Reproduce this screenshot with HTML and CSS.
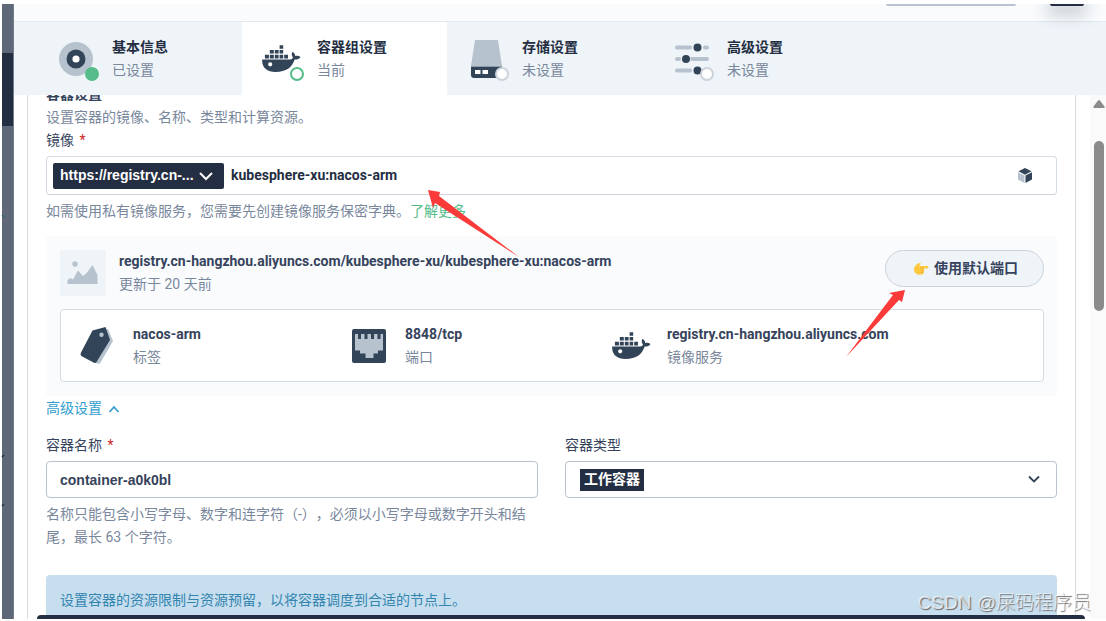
FILE: index.html
```html
<!DOCTYPE html>
<html lang="zh-CN">
<head>
<meta charset="utf-8">
<title>容器组设置</title>
<link rel="stylesheet" href="styles.css">
</head>
<body>
<svg class="defs" aria-hidden="true">
  <symbol id="docker" viewBox="0 0 40 40">
    <g fill="#324558">
      <path d="M17.600 6.200h3.600v3.600h-3.600zM7.800 11h4v3.600h-4zM12.800 11h3.800v3.600h-3.800zM17.600 11h3.600v3.600h-3.600zM2.900 15.800h4v3.600h-4zM7.800 15.800h4v3.600h-4zM12.800 15.800h3.800v3.600h-3.800zM17.600 15.800h3.600v3.600h-3.600zM22.200 15.800h3.800v3.600h-3.800z"/>
      <path fill-rule="evenodd" d="M.2 20.500H28c1.600 0 2.600-.8 3-2-1.600-1.600-1.700-3.900-.4-5.800 1.700 1.100 2.600 2.600 2.600 4.200 1.900-.5 3.700-.2 5.300 1.100-1.200 1.900-3.100 2.700-5.800 2.600C30 28.500 24.500 33 13.500 33 5 33-.5 28.500.2 20.500zM8.200 23.200a2.100 2.100 0 1 0 0 4.200 2.100 2.100 0 0 0 0-4.200z"/>
    </g>
  </symbol>
</svg>
<div class="screen">
  <aside class="rail">
    <div class="rail-active"></div>
    <svg class="rail-marks" viewBox="0 0 11 300"><path d="M0 89l2 2" stroke="#2f6b62" stroke-width="1.500"/><path d="M0 0" /><path d="M0 331l2-2M0 380l2-2" stroke="#242e42" stroke-width="1.500"/></svg>
  </aside>
  <main class="main">
    <header class="topbar">
      <span class="top-pill"></span>
      <span class="top-button"></span>
    </header>
    <nav class="steps">
      <div class="step">
        <span class="step-icon">
          <svg viewBox="0 0 40 40"><circle cx="19" cy="20" r="17" fill="#b6c2cd"/><circle cx="19" cy="20" r="9.500" fill="#324558"/><circle cx="19" cy="20" r="3.600" fill="#fff"/></svg>
          <i class="dot done"></i>
        </span>
        <span class="pair"><strong>基本信息</strong><span>已设置</span></span>
      </div>
      <div class="step current">
        <span class="step-icon">
          <svg viewBox="0 0 40 40"><use href="#docker"/></svg>
          <i class="dot now"></i>
        </span>
        <span class="pair"><strong>容器组设置</strong><span>当前</span></span>
      </div>
      <div class="step">
        <span class="step-icon">
          <svg viewBox="0 0 40 40"><path d="M8 1h23l4 26H4z" fill="#b6c2cd"/><path d="M4 27.500h31V36a3 3 0 0 1-3 3H7a3 3 0 0 1-3-3z" fill="#324558"/><path d="M8 31h5.500v4H8zM15.500 31H21v4h-5.500z" fill="#fff"/></svg>
          <i class="dot"></i>
        </span>
        <span class="pair"><strong>存储设置</strong><span>未设置</span></span>
      </div>
      <div class="step">
        <span class="step-icon">
          <svg viewBox="0 0 40 40"><g stroke="#b6c2cd" stroke-width="4" stroke-linecap="round"><path d="M5 8.500h13M33 8.500h2M5 20h2M20 20h15M5 31.500h13"/></g><g fill="#324558"><circle cx="25.500" cy="8.500" r="4"/><circle cx="14" cy="20" r="4"/><circle cx="25.500" cy="31.500" r="4"/></g></svg>
          <i class="dot"></i>
        </span>
        <span class="pair"><strong>高级设置</strong><span>未设置</span></span>
      </div>
    </nav>
    <div class="body">
      <form class="panel">
        <h2>容器设置</h2>
        <p class="muted">设置容器的镜像、名称、类型和计算资源。</p>
        <label class="label" for="image">镜像 <b>*</b></label>
        <div class="image-field">
          <span class="registry">
            <select aria-label="镜像服务"><option>https://registry.cn-...</option></select>
            <svg viewBox="0 0 16 16"><path d="M2 5l6 6 6-6" fill="none" stroke="#fff" stroke-width="2"/></svg>
          </span>
          <input id="image" type="text" value="kubesphere-xu:nacos-arm">
          <button class="cube" type="button" aria-label="选择镜像">
            <svg viewBox="0 0 16 16"><path d="M8 0l6.500 3.300L8 6.700 1.500 3.300z" fill="#324558"/><path d="M1 4.200l6.500 3.400v7.400L1 11.500z" fill="#b6c2cd"/><path d="M15 4.200L8.500 7.600v7.400L15 11.500z" fill="#324558"/></svg>
          </button>
        </div>
        <p class="muted hint">如需使用私有镜像服务，您需要先创建镜像服务保密字典。<a href="#">了解更多</a></p>

        <section class="card">
          <div class="card-head">
            <svg class="thumb" viewBox="0 0 46 46"><path d="M0 0h46v46H0z" fill="#eff4f9"/><circle cx="15" cy="14" r="2.700" fill="#b6c2cd"/><path d="M7.500 34v-4l3-2 2.500 1.500 5-9 5 5.500 4-3.500 5.500-7.500 5 10v9z" fill="#b6c2cd"/></svg>
            <div class="pair grow"><strong>registry.cn-hangzhou.aliyuncs.com/kubesphere-xu/kubesphere-xu:nacos-arm</strong><span>更新于 20 天前</span></div>
            <button class="port-button" type="button">
              <svg viewBox="0 0 16 16"><path d="M1 7.500C1.500 5 4 2.700 6.500 2c1.200-.3 1.700 1 .7 1.700L6 5h8.300c1.600 0 1.600 2.500 0 2.500H10.500c1.200.2 1.100 1.900 0 2 .9.300.8 1.800-.2 1.900.7.500.4 1.700-.6 1.800C7.500 13.900 4.500 14 3 12.500 1.300 11.200.7 9.300 1 7.500z" fill="#ffc83d"/><path d="M7.500 7.600h3M8 9.500h2.500M8 11.400h2.200" stroke="#e5a535" stroke-width=".6" fill="none"/></svg>
              使用默认端口
            </button>
          </div>
          <div class="facts">
            <div class="fact">
              <svg viewBox="0 0 40 40"><path d="M17 5.500L30 3l5 12-12.500 21.500c-.8 1.300-2 1.600-3.300.9L7 30z" fill="#b6c2cd"/><path fill-rule="evenodd" d="M14.500 4.500L27.500 1 32 14 18.500 36c-.6 1-1.500 1.200-2.500.7L4.200 30.500c-1.800-1-2-2.400-1.200-4zM23.500 6.500a2.200 2.200 0 1 0 0 4.400 2.200 2.200 0 0 0 0-4.400z" fill="#324558"/></svg>
              <div class="pair"><strong>nacos-arm</strong><span>标签</span></div>
            </div>
            <div class="fact">
              <svg viewBox="0 0 40 40"><rect x="2" y="3" width="34" height="34" rx="2" fill="#324558"/><path d="M5 8h3v5h3V8h3.500v5h3V8H21v5h3V8h3.500v5h3V8H33v16.500h-5v3h-4.500V32h-8v-4.500H10v-3H5z" fill="#b6c2cd"/></svg>
              <div class="pair"><strong>8848/tcp</strong><span>端口</span></div>
            </div>
            <div class="fact">
              <svg viewBox="0 0 40 40"><use href="#docker"/></svg>
              <div class="pair"><strong>registry.cn-hangzhou.aliyuncs.com</strong><span>镜像服务</span></div>
            </div>
          </div>
        </section>

        <button class="toggle" type="button">高级设置
          <svg viewBox="0 0 16 16"><path d="M3.500 11L8 6l4.500 5" fill="none" stroke="#329dce" stroke-width="1.800"/></svg>
        </button>

        <div class="columns">
          <div>
            <label class="label" for="name">容器名称 <b>*</b></label>
            <input class="box" id="name" type="text" value="container-a0k0bl">
            <p class="muted hint">名称只能包含小写字母、数字和连字符（-），必须以小写字母或数字开头和结尾，最长 63 个字符。</p>
          </div>
          <div>
            <label class="label" for="type">容器类型</label>
            <div class="type">
              <select class="box" id="type"><option>工作容器</option></select>
              <svg viewBox="0 0 16 16"><path d="M3 5.500l5 5 5-5" fill="none" stroke="#324558" stroke-width="1.800"/></svg>
            </div>
          </div>
        </div>
        <div class="notice">设置容器的资源限制与资源预留，以将容器调度到合适的节点上。</div>
      </form>
      <div class="scrollbar">
        <svg viewBox="0 0 12 10"><path d="M5 1.500q1-1 2 0l4.500 6q.5 1-.5 1.500H1Q0 8.500.5 7.500z" fill="#8b8b8b"/></svg>
        <div class="scroll-thumb"></div>
      </div>
    </div>
  </main>
  <div class="bottom-bar"></div>
  <svg class="arrows" aria-hidden="true">
    <g fill="#fb3b39">
      <path d="M428 190l12 2-1 4 80 61-84-54-2 5z"/>
      <path d="M905 290l-3 12-3-2-53 57 47-62-4-2z"/>
    </g>
  </svg>
  <div class="watermark">CSDN @屎码程序员</div>
</div>
</body>
</html>
```
FILE: styles.css
```css
* {
  box-sizing: border-box;
}

body {
  margin: 0;
  background: #fff;
  color: #242e42;
  font: 14px/23px Roboto, "Noto Sans CJK SC", sans-serif;
  text-spacing-trim: space-all;
}

h2, p {
  margin: 0;
}

button, input, select {
  font: inherit;
  color: inherit;
  border: 0;
  background: none;
  padding: 0;
  margin: 0;
  appearance: none;
  outline: 0;
}

svg {
  display: block;
  flex: none;
}

.defs {
  position: absolute;
  width: 0;
  height: 0;
}

.screen {
  position: relative;
  display: flex;
  height: 100vh;
  padding: 4px 0 2px 2px;
  overflow: hidden;
}

.rail {
  flex: none;
  width: 12px;
  padding-top: 49px;
  background: #5f6878;
  border-right: 1px solid #747c8b;
}

.rail-active {
  height: 73px;
  background: #242e42;
}

.rail-marks {
  width: 11px;
  height: 300px;
  overflow: visible;
}

.main {
  flex: 1;
  min-width: 0;
  display: flex;
  flex-direction: column;
  overflow: hidden;
}

.topbar {
  flex: none;
  display: flex;
  justify-content: flex-end;
  align-items: flex-start;
  gap: 34px;
  height: 18px;
  padding-right: 22px;
  background: #f9fbfd;
  border-bottom: 1px solid #e3e9ef;
}

.top-pill {
  width: 130px;
  height: 2px;
  border-bottom: 2px solid #b9c2ce;
  border-radius: 0 0 8px 8px;
}

.top-button {
  position: relative;
  z-index: 1;
  width: 34px;
  height: 2px;
  border-radius: 0 0 4px 4px;
  background: #242e42;
  box-shadow: 0 4px 16px 4px rgba(36, 46, 66, 0.3);
}

.steps {
  flex: none;
  display: flex;
  padding-left: 23px;
  background: #eff4f9;
}

.step {
  display: flex;
  align-items: center;
  gap: 15px;
  width: 205px;
  height: 73px;
  padding-left: 20px;
}

.step.current {
  background: #fff;
}

.step-icon {
  position: relative;
}

.step-icon svg, .fact svg {
  width: 40px;
  height: 40px;
  overflow: visible;
}

.dot {
  position: absolute;
  right: -2px;
  bottom: -2px;
  width: 14px;
  height: 14px;
  border: 2px solid #ccd3db;
  border-radius: 50%;
  background: #fff;
}

.dot.done {
  border-color: #55bc8a;
  background: #55bc8a;
}

.dot.now {
  border-color: #55bc8a;
}

.pair {
  display: flex;
  flex-direction: column;
  color: #79879c;
}

.pair strong {
  color: #242e42;
  font-weight: 700;
}

.body {
  flex: 1;
  min-height: 0;
  display: flex;
  justify-content: space-between;
  gap: 14px;
  padding-left: 13px;
  overflow: hidden;
}

.panel {
  flex: 1;
  min-width: 0;
  margin-top: -12px;
  padding: 0 18px;
  border: solid #d8dde2;
  border-width: 0 1px;
}

.panel h2 {
  color: #36435c;
  font-size: 14px;
}

.muted {
  color: #79879c;
}

.hint {
  margin-top: 5px;
}

.hint a {
  color: #55bc8a;
  text-decoration: none;
}

.label {
  display: block;
  margin-bottom: 4px;
  color: #36435c;
}

.label b {
  color: #ca2621;
  font-weight: 400;
  margin-left: 2px;
}

.image-field {
  display: flex;
  align-items: center;
  height: 39px;
  padding: 0 23px 0 6px;
  border: 1px solid #d5dbe3;
  border-bottom-color: #ccd3db;
  border-radius: 4px;
}

.registry {
  position: relative;
  flex: none;
  margin-right: 7px;
}

.registry select {
  display: block;
  width: 171px;
  height: 26px;
  padding: 0 7px;
  border-radius: 2px;
  background: #242e42;
  color: #fff;
  font-family: "Liberation Sans", sans-serif;
  font-weight: 700;
}

.registry svg {
  position: absolute;
  top: 5px;
  right: 10px;
  width: 16px;
  height: 16px;
  pointer-events: none;
}

.image-field input {
  flex: 1;
  min-width: 0;
  font-weight: 700;
}

.cube svg {
  width: 16px;
  height: 16px;
}

.card {
  margin-top: 13px;
  padding: 14px 13px 14px 14px;
  background: #f9fbfd;
  border-radius: 4px;
}

.card-head {
  display: flex;
  align-items: flex-start;
  gap: 13px;
}

.thumb {
  width: 46px;
  height: 46px;
  border-radius: 2px;
}

.grow {
  flex: 1;
  min-width: 0;
}

.card strong {
  color: #36435c;
}

.port-button {
  display: flex;
  align-items: center;
  gap: 5px;
  height: 37px;
  padding: 0 25px 0 27px;
  border: 1px solid #ccd3db;
  border-radius: 19px;
  background: #eff4f9;
  color: #36435c;
  font-weight: 700;
}

.port-button svg, .toggle svg {
  width: 16px;
  height: 16px;
}

.facts {
  display: grid;
  grid-template-columns: 272fr 262fr 431fr;
  margin-top: 13px;
  padding-left: 17px;
  background: #fff;
  border: 1px solid #d5dbe3;
  border-radius: 4px;
}

.fact {
  display: flex;
  align-items: center;
  gap: 15px;
  height: 71px;
}

.toggle {
  display: flex;
  align-items: center;
  gap: 4px;
  margin-top: 1px;
  color: #329dce;
}

.columns {
  display: grid;
  grid-template-columns: 1fr 1fr;
  gap: 27px;
  margin-top: 14px;
}

.box {
  display: block;
  width: 100%;
  height: 37px;
  padding: 0 13px;
  border: 1px solid #b9c2ce;
  border-radius: 4px;
  color: #36435c;
  font-family: "Liberation Sans", "Noto Sans CJK SC", sans-serif;
  font-weight: 700;
}

.type {
  position: relative;
}

.type .box {
  padding-left: 18px;
  color: #fff;
  background: linear-gradient(#242e42, #242e42) 14px center / 64px 22px no-repeat;
}

.type svg {
  position: absolute;
  top: 10px;
  right: 15px;
  width: 16px;
  height: 16px;
  pointer-events: none;
}

.notice {
  margin-top: 26px;
  padding: 14px;
  border-radius: 4px;
  background: #c7deef;
  color: #3385b0;
}

.scrollbar {
  flex: none;
  display: flex;
  flex-direction: column;
  align-items: center;
  gap: 32px;
  width: 16px;
  padding: 4px 0 0 2px;
  background: #fafafa;
}

.scrollbar svg {
  width: 12px;
  height: 10px;
}

.scroll-thumb {
  width: 10px;
  height: 170px;
  border-radius: 5px;
  background: #8b8b8b;
}

.bottom-bar {
  position: absolute;
  left: 37px;
  right: 21px;
  bottom: 2px;
  height: 4px;
  border-radius: 4px 4px 0 0;
  background: #242e42;
}

.arrows {
  position: absolute;
  inset: 0;
  width: 100%;
  height: 100%;
  pointer-events: none;
}

.watermark {
  position: absolute;
  right: 15px;
  bottom: 4px;
  color: rgba(255, 255, 255, 0.7);
  font-family: "Liberation Sans", "Noto Sans CJK SC", sans-serif;
  font-size: 19px;
  font-weight: 300;
  line-height: 28px;
  text-shadow: 1px 1px 1px #666;
}
```
